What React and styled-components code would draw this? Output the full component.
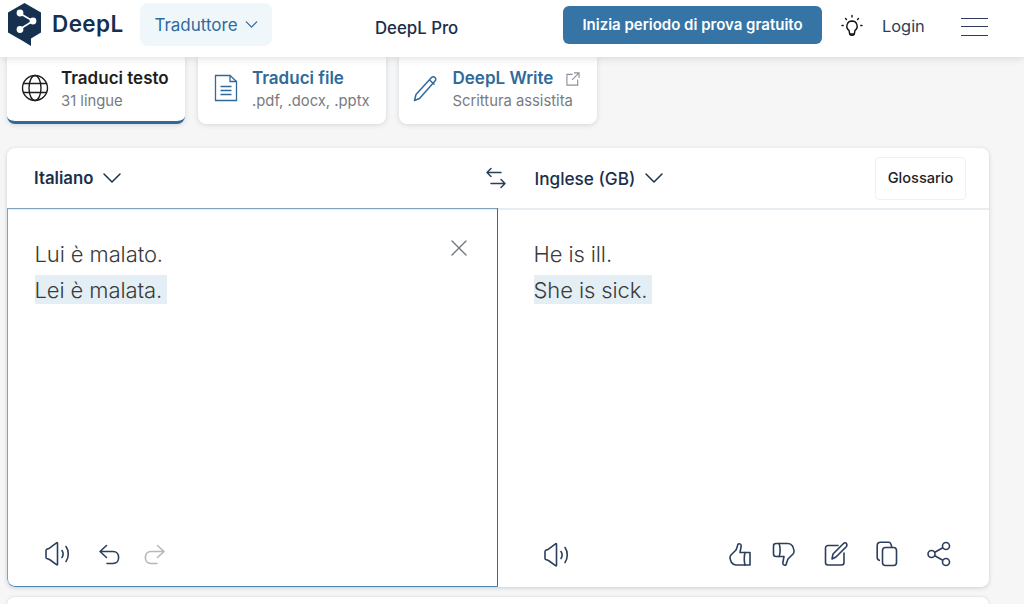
import styled, { createGlobalStyle } from "styled-components";

const GlobalStyle = createGlobalStyle`
  html, body {
    margin: 0;
    padding: 0;
    height: 604px;
    overflow: hidden;
    background: #f6f6f6;
    font-family: Inter, "Liberation Sans", sans-serif;
  }
  * {
    box-sizing: border-box;
  }
`;

const Page = styled.div`
  width: 1024px;
  height: 604px;
  overflow: hidden;
`;

const Header = styled.header`
  position: relative;
  z-index: 2;
  height: 57px;
  background: #ffffff;
  box-shadow: 0 1px 8px rgba(0, 0, 0, 0.14);
  display: flex;
  align-items: flex-start;
`;

const Logo = styled.div`
  display: flex;
  align-items: center;
  gap: 10px;
  margin: 3px 0 0 7px;
  width: 133px;
  color: #16304f;
  font-size: 22.5px;
  font-weight: 600;
  letter-spacing: 0.4px;
  span {
    margin-top: -2px;
  }
`;

const NavPill = styled.div`
  width: 132px;
  height: 43px;
  margin-top: 3px;
  border-radius: 8px;
  background: #f0f7fa;
  color: #2f6b9c;
  font-size: 17px;
  display: flex;
  align-items: center;
  justify-content: center;
  gap: 7px;
`;

const ProLink = styled.div`
  margin: 19px 0 0 103px;
  width: 188px;
  color: #1b2d47;
  font-size: 16.8px;
  font-weight: 500;
  line-height: 19px;
`;

const TrialButton = styled.button`
  width: 259px;
  height: 38px;
  margin-top: 6px;
  border: 0;
  border-radius: 6px;
  background: #3574a5;
  color: #ffffff;
  font: 600 15px Inter, sans-serif;
  padding: 0 0 2px;
`;

const BulbIcon = styled.svg`
  margin: 14px 0 0 18px;
`;

const LoginLink = styled.div`
  margin: 16px 0 0 18px;
  width: 79px;
  color: #2b3d59;
  font-size: 16.4px;
  line-height: 20px;
`;

const Burger = styled.div`
  width: 27px;
  margin-top: 17.5px;
  display: flex;
  flex-direction: column;
  gap: 7.5px;
  i {
    display: block;
    height: 1.2px;
    background: #2b3d59;
  }
`;

const Tabs = styled.nav`
  display: flex;
  gap: 13px;
  padding-left: 7px;
  height: 91px;
`;

const Tab = styled.div`
  width: ${(p) => p.$width}px;
  height: 67px;
  background: #ffffff;
  border-radius: 0 0 8px 8px;
  box-shadow: 0 1px 5px rgba(30, 50, 80, 0.16);
  border-bottom: ${(p) => (p.$active ? "3px solid #2f6a9b" : "0")};
  display: flex;
  align-items: flex-start;
  overflow: hidden;
`;

const TabIcon = styled.div`
  width: 55px;
  margin-right: -1px;
  flex: none;
  padding-top: 17px;
  display: flex;
  justify-content: center;
`;

const TabText = styled.div`
  padding-top: 11px;
`;

const TabTitle = styled.div`
  color: ${(p) => (p.$active ? "#1e1e1e" : "#2f6a9b")};
  font-size: 17px;
  font-weight: 600;
  line-height: 21px;
  display: flex;
  align-items: center;
  gap: 13px;
`;

const TabSub = styled.div`
  margin-top: 3px;
  color: #777b80;
  font-size: 14.8px;
  line-height: 18px;
`;

const Translator = styled.section`
  width: 982px;
  height: 439px;
  margin-left: 7px;
  background: #ffffff;
  border-radius: 8px;
  box-shadow: 0 1px 4px rgba(30, 50, 80, 0.2);
  overflow: hidden;
  display: flex;
  flex-direction: column;
`;

const LangBar = styled.div`
  height: 62px;
  flex: none;
  display: flex;
  align-items: center;
  border-bottom: 2px solid #e8edf1;
`;

const LangPick = styled.div`
  display: flex;
  align-items: center;
  gap: 9px;
  color: #1b2f4b;
  font-size: ${(p) => (p.$bold ? 16.8 : 17.2)}px;
  font-weight: ${(p) => (p.$bold ? 600 : 500)};
  margin-left: ${(p) => p.$left}px;
`;

const SwapIcon = styled.svg`
  margin-left: 363px;
`;

const GlossaryButton = styled.button`
  margin-left: auto;
  margin-right: 23px;
  width: 91px;
  height: 43px;
  background: #ffffff;
  border: 1px solid #eff1f3;
  border-radius: 4px;
  color: #1e1e1e;
  font: 500 14.6px Inter, sans-serif;
`;

const Panes = styled.div`
  flex: 1;
  display: flex;
  margin-top: -2px;
`;

const SourcePane = styled.div`
  position: relative;
  width: 491px;
  border: 1px solid #2f6a9b;
  border-top-color: #7ea3c1;
  border-left-color: #7ea3c1;
  border-bottom-color: #4f83ab;
  border-bottom-left-radius: 8px;
  padding: 27px 0 0 26.5px;
  display: flex;
  flex-direction: column;
`;

const TargetPane = styled.div`
  flex: 1;
  margin-top: 1px;
  padding: 27px 38px 0 35.5px;
  display: flex;
  flex-direction: column;
`;

const Line = styled.div`
  color: #3a3a3a;
  font-size: 22px;
  font-weight: 350;
  line-height: 36px;
  height: 36px;
  letter-spacing: -0.1px;
  span {
    background: ${(p) => (p.$marked ? "#e3eff4" : "transparent")};
    padding: 2px 5px 1px 0;
  }
`;

const ClearIcon = styled.svg`
  position: absolute;
  top: 30px;
  right: 29px;
`;

const PaneFooter = styled.div`
  margin-top: auto;
  height: 46px;
  display: flex;
  align-items: flex-start;
  padding-left: 9px;
`;

const FootIcon = styled.svg`
  margin-left: ${(p) => p.$left || 0}px;
  margin-top: ${(p) => p.$top || 0}px;
  flex: none;
`;

const Spacer = styled.div`
  flex: 1;
`;

const NextCard = styled.div`
  width: 982px;
  height: 40px;
  margin: 10px 0 0 7px;
  background: #ffffff;
  border-radius: 8px 8px 0 0;
  box-shadow: 0 0 3px rgba(30, 50, 80, 0.18);
`;

const Chevron = ({ size = 20, color = "#1b2f4b", width = 1.5 }) => (
  <svg width={size} height={size} viewBox="0 0 20 20" fill="none" stroke={color} strokeWidth={width}>
    <path d="M2 6l8 8 8-8" strokeLinecap="round" strokeLinejoin="round" />
  </svg>
);

const Speaker = ({ left }) => (
  <FootIcon $left={left} width="28" height="28" viewBox="0 0 28 28" fill="none" stroke="#2b3f5c" strokeWidth="1.6" strokeLinecap="round" strokeLinejoin="round">
    <path d="M2 11v6.5c0 .6.3 1 .8 1.2l2.7 1 7 5.2c.6.4 1 .1 1-.5V3.6c0-.7-.5-1-1-.5l-7 5.3-2.7 1c-.5.3-.8.7-.8 1.6z" transform="translate(0 -.2)" />
    <path d="M18 10.5c1.3 2 1.3 5 0 7" />
    <path d="M22 6.5c3 4 3 11 0 15" />
  </FootIcon>
);

const App = () => {
  return (
    <Page>
      <GlobalStyle />
      <Header>
        <Logo>
          <svg width="35" height="43" viewBox="0 0 35 43">
            <path d="M17.5 0L34 9.5v20L24 35.5V43l-9-5.5L1 29.5v-20z" fill="#16304f" />
            <g stroke="#fff" strokeWidth="1.6" fill="#fff">
              <path d="M13 10.500L26 18 13 26" fill="none" />
              <circle cx="13" cy="10" r="2.6" />
              <circle cx="26" cy="18" r="2.6" />
              <circle cx="13" cy="26.5" r="2.6" />
            </g>
          </svg>
          <span>DeepL</span>
        </Logo>
        <NavPill>
          Traduttore
          <Chevron size={13} color="#2f6b9c" width={2} />
        </NavPill>
        <ProLink>DeepL Pro</ProLink>
        <TrialButton>Inizia periodo di prova gratuito</TrialButton>
        <BulbIcon width="24" height="24" viewBox="0 0 24 24" fill="none" stroke="#111" strokeWidth="1.4" strokeLinecap="round">
          <path d="M12 7a5.2 5.2 0 0 0-3 9.4l.7 3.6h4.6l.7-3.6A5.2 5.2 0 0 0 12 7z" strokeLinejoin="round" />
          <path d="M10 20.5c.3 1 3.700 1 4 0" />
          <path d="M12 1.500v1.500M5.500 4.500l1 1M18.500 4.500l-1 1M2 11.500h1.200M20.800 11.500H22" />
        </BulbIcon>
        <LoginLink>Login</LoginLink>
        <Burger>
          <i />
          <i />
          <i />
        </Burger>
      </Header>

      <Tabs>
        <Tab $width={178} $active>
          <TabIcon>
            <svg width="28" height="28" viewBox="0 0 28 28" fill="none" stroke="#1e1e1e" strokeWidth="1.4">
              <circle cx="14" cy="14" r="12.500" />
              <ellipse cx="14" cy="14" rx="6" ry="12.500" />
              <path d="M2.500 9.500h23M2.500 18.500h23" />
            </svg>
          </TabIcon>
          <TabText>
            <TabTitle $active>Traduci testo</TabTitle>
            <TabSub>31 lingue</TabSub>
          </TabText>
        </Tab>
        <Tab $width={187.5}>
          <TabIcon>
            <svg width="24" height="28" viewBox="0 0 24 28" fill="none" stroke="#2f6a9b" strokeWidth="1.300">
              <path d="M1.500 1.500h14.500l6.500 6v19H1.500z" />
              <path d="M16 1.500v6h6.500M6.500 12.500h11M6.500 16.500h11M6.500 20.500h11" />
            </svg>
          </TabIcon>
          <TabText>
            <TabTitle>Traduci file</TabTitle>
            <TabSub>.pdf, .docx, .pptx</TabSub>
          </TabText>
        </Tab>
        <Tab $width={198}>
          <TabIcon>
            <svg width="26" height="28" viewBox="0 0 26 28" fill="none" stroke="#2f6a9b" strokeWidth="1.500" strokeLinejoin="round">
              <path d="M3 20.500L18.500 3.500c1-1 2.500-1 3.500 0s1 2.500 0 3.500L6.500 24.500l-5 2z" />
              <path d="M16.500 6l5 4.500" />
            </svg>
          </TabIcon>
          <TabText>
            <TabTitle>
              DeepL Write
              <svg width="14" height="14" viewBox="0 0 15 15" fill="none" stroke="#8a9099" strokeWidth="1.200">
                <path d="M7 2.500H1v11.500h11.500V8M8.500 1h5.500v5.500M14 1L6.500 8.500" />
              </svg>
            </TabTitle>
            <TabSub>Scrittura assistita</TabSub>
          </TabText>
        </Tab>
      </Tabs>

      <Translator>
        <LangBar>
          <LangPick $left={27} $bold>
            Italiano
            <Chevron />
          </LangPick>
          <SwapIcon width="22" height="24" viewBox="0 0 22 24" fill="none" stroke="#2b3f5c" strokeWidth="1.500" strokeLinecap="round" strokeLinejoin="round">
            <path d="M16 6.500H2M6 2.500L2 6.500l4 4M6 17.500h14M16 13.500l4 4-4 4" />
          </SwapIcon>
          <LangPick $left={27}>
            Inglese (GB)
            <Chevron />
          </LangPick>
          <GlossaryButton>Glossario</GlossaryButton>
        </LangBar>
        <Panes>
          <SourcePane>
            <Line>Lui è malato.</Line>
            <Line $marked>
              <span>Lei è malata.</span>
            </Line>
            <ClearIcon width="18" height="18" viewBox="0 0 18 18" stroke="#6f7680" strokeWidth="1.400" strokeLinecap="round">
              <path d="M2 2l14 14M16 2L2 16" />
            </ClearIcon>
            <PaneFooter>
              <Speaker />
              <FootIcon $left={26} $top={3} width="24" height="24" viewBox="0 0 24 24" fill="none" stroke="#2b3f5c" strokeWidth="1.600" strokeLinecap="round" strokeLinejoin="round">
                <path d="M8.500 2.500l-6.500 6 6.500 6M2 8.500h13c7.500 0 7.500 12 0 12H9" />
              </FootIcon>
              <FootIcon $left={20} $top={3} width="24" height="24" viewBox="0 0 24 24" fill="none" stroke="#b3b8bf" strokeWidth="1.600" strokeLinecap="round" strokeLinejoin="round">
                <path d="M15.500 2.500l6.500 6-6.500 6M22 8.500H9c-7.500 0-7.500 12 0 12h6" />
              </FootIcon>
            </PaneFooter>
          </SourcePane>
          <TargetPane>
            <Line>He is ill.</Line>
            <Line $marked>
              <span>She is sick.</span>
            </Line>
            <PaneFooter>
              <Speaker />
              <Spacer />
              <FootIcon width="24" height="26" viewBox="0 0 24 26" fill="none" stroke="#2b3f5c" strokeWidth="1.600" strokeLinecap="round" strokeLinejoin="round">
                <path d="M2.500 14.500L8 9l1.500-4c0-1.800 1-2.500 2-2.200 1.500.4 2 1.800 1.500 3.400L12 11.500h10V24H8c-2.500 0-3.500-1-4.500-2.500l-1-2.500c-.7-1.500-.7-3 0-4.500z" />
                <path d="M17 11.500c-1 3-1 9.500 0 12.500" />
              </FootIcon>
              <FootIcon $left={20} width="24" height="26" viewBox="0 0 24 26" fill="none" stroke="#2b3f5c" strokeWidth="1.600" strokeLinecap="round" strokeLinejoin="round">
                <path d="M21.500 12.500L16 18l-1.500 4c0 1.800-1 2.500-2 2.200-1.500-.4-2-1.800-1.500-3.400l1-5.300H4c-1.500 0-2.500-1-2.500-2.500V5c0-1.500 1-2.500 2.500-2.500h12c2.500 0 3.500 1 4.500 2.500l1 2.500c.7 1.500.7 3.500 0 5z" />
                <path d="M7 2.500c1.500 3 1.500 10 0 13" />
              </FootIcon>
              <FootIcon $left={28} width="24" height="26" viewBox="0 0 24 26" fill="none" stroke="#2b3f5c" strokeWidth="1.600" strokeLinecap="round" strokeLinejoin="round">
                <path d="M14 4.500H4a2.500 2.500 0 0 0-2.500 2.500v14.500A2.500 2.500 0 0 0 4 24h13.500a2.500 2.500 0 0 0 2.500-2.500V12" />
                <path d="M8 18l1-5L19.500 2.500c1-1 2.500-1 3 0s.5 2 0 3L12 16z" />
              </FootIcon>
              <FootIcon $left={28} width="22" height="26" viewBox="0 0 22 26" fill="none" stroke="#2b3f5c" strokeWidth="1.600" strokeLinejoin="round">
                <rect x="6.500" y="6.500" width="14" height="18" rx="3" />
                <path d="M4 19.500c-1.800-.3-2.800-1.400-2.800-3V4.500C1.200 2.500 2.500 1.200 4.500 1.200h8c1.500 0 2.800 1 3.200 5" />
              </FootIcon>
              <FootIcon $left={29} width="24" height="26" viewBox="0 0 24 26" fill="none" stroke="#2b3f5c" strokeWidth="1.600">
                <circle cx="4.500" cy="13" r="3.500" />
                <circle cx="19" cy="5" r="3.500" />
                <circle cx="19" cy="21" r="3.500" />
                <path d="M7.800 11.200l8-4.500M7.800 14.800l8 4.500" />
              </FootIcon>
            </PaneFooter>
          </TargetPane>
        </Panes>
      </Translator>
      <NextCard />
    </Page>
  );
};

export default App;
